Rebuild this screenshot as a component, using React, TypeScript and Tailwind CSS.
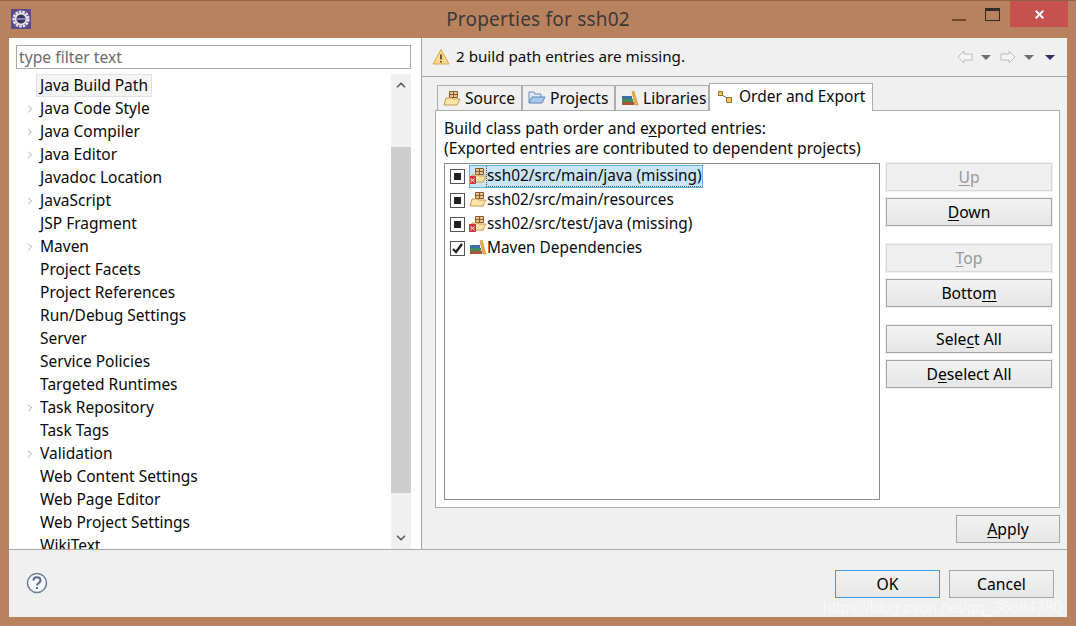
import React from 'react';
import { X, ChevronUp, ChevronDown, ChevronRight } from 'lucide-react';

const treeItems: { label: string; arrow?: boolean }[] = [
  { label: 'Java Build Path' },
  { label: 'Java Code Style', arrow: true },
  { label: 'Java Compiler', arrow: true },
  { label: 'Java Editor', arrow: true },
  { label: 'Javadoc Location' },
  { label: 'JavaScript', arrow: true },
  { label: 'JSP Fragment' },
  { label: 'Maven', arrow: true },
  { label: 'Project Facets' },
  { label: 'Project References' },
  { label: 'Run/Debug Settings' },
  { label: 'Server' },
  { label: 'Service Policies' },
  { label: 'Targeted Runtimes' },
  { label: 'Task Repository', arrow: true },
  { label: 'Task Tags' },
  { label: 'Validation', arrow: true },
  { label: 'Web Content Settings' },
  { label: 'Web Page Editor' },
  { label: 'Web Project Settings' },
  { label: 'WikiText' },
];

const PackageIcon = ({ missing }: { missing?: boolean }) => (
  <svg width="18" height="18" viewBox="0 0 18 18" className="shrink-0">
    <path d="M6.5 1.5h8v6h-8z" fill="#e8c48e" stroke="#8a5a2c" />
    <path d="M10.5 1.5v6M6.5 4.5h8" stroke="#8a5a2c" />
    <path d="M3 8h6l1 1h7l-3 6H1z" fill="#fbe3a8" stroke="#c99a4e" />
    {missing && <rect x="0" y="9" width="7" height="8" fill="#d8323c" />}
    {missing && <path d="M1.5 11.5l4 3.5M5.5 11.5l-4 3.5" stroke="#fff" />}
  </svg>
);

const LibraryIcon = () => (
  <svg width="18" height="18" viewBox="0 0 18 18" className="shrink-0">
    <rect x="1" y="6" width="10" height="3" fill="#3a6ea5" />
    <rect x="1" y="9" width="11" height="3" fill="#3f8f5a" />
    <rect x="1" y="12" width="12" height="3" fill="#a8553a" />
    <path d="M11 2l2-1 4 14h-3z" fill="#e8b04a" stroke="#b57f25" strokeWidth="0.5" />
  </svg>
);

const FolderIcon = () => (
  <svg width="18" height="18" viewBox="0 0 18 18" className="shrink-0">
    <path d="M1 13V2h5l1 2h6v3" fill="#dbe9f8" stroke="#6b8fb8" />
    <path d="M1 13l3-6h13l-3 6z" fill="#a9c8ee" stroke="#5f86b6" />
  </svg>
);

const OrderIcon = () => (
  <svg width="16" height="16" viewBox="0 0 16 16" className="shrink-0">
    <path d="M1.5 2.5h4v4h-4z" fill="#f1c75c" stroke="#9a7426" />
    <path d="M9.5 8.5h5v5h-5z" fill="#f1c75c" stroke="#9a7426" />
    <path d="M5 6l5 3" stroke="#6d6d6d" />
  </svg>
);

const Underlined = ({ text, at }: { text: string; at: number }) => (
  <>
    {text.slice(0, at)}
    <span className="underline underline-offset-2">{text[at]}</span>
    {text.slice(at + 1)}
  </>
);

const SideButton = ({ text, at, disabled, className = '' }: { text: string; at: number; disabled?: boolean; className?: string }) => (
  <div
    className={`h-[28px] w-[166px] pt-[2px] flex items-center justify-center border ring-1 ring-[#f0f0f0] text-[15.7px] leading-none ${
      disabled
        ? 'bg-[#efefef] border-[#d8d8d8] text-[#9a9a9a]'
        : 'bg-gradient-to-b from-[#f2f2f2] to-[#e6e6e6] border-[#a5a5a5] text-black'
    } ${className}`}
  >
    <span><Underlined text={text} at={at} /></span>
  </div>
);

const Tab = ({ icon, label, width }: { icon: React.ReactNode; label: string; width: string }) => (
  <div className={`${width} h-[25px] flex items-center gap-[4px] pl-[5px] pt-[2px] bg-[#f0f0f0] border border-b-0 border-[#adadad] text-[15.6px] text-[#0a0a0a]`}>
    {icon}
    <span>{label}</span>
  </div>
);

const Row = ({ check, icon, label, selected }: { check: 'mixed' | 'on'; icon: React.ReactNode; label: string; selected?: boolean }) => (
  <div className="h-[24px] flex items-center pl-[5px]">
    <div className="w-[15px] h-[15px] border border-[#555555] bg-white flex items-center justify-center shrink-0 mr-[4px]">
      {check === 'mixed' ? (
        <div className="w-[7px] h-[7px] bg-[#222]" />
      ) : (
        <svg width="13" height="13" viewBox="0 0 13 13"><path d="M2 7l3 3 6-8" fill="none" stroke="#222" strokeWidth="2.4" /></svg>
      )}
    </div>
    <div className={`h-[23px] flex items-center pr-[1px] ${selected ? 'bg-[#c9e5f5] outline outline-1 -outline-offset-1 outline-[#5fb0dc]' : ''}`}>
      {icon}
      <span className={`text-[15.4px] leading-[20px] text-[#0a0a0a] ${selected ? 'outline outline-1 outline-dotted outline-[#555555]' : ''}`}>{label}</span>
    </div>
  </div>
);

export default function App() {
  return (
    <div className="w-[1076px] h-[626px] overflow-hidden relative bg-[#b9825f] border-t border-[#8f6246] font-['Noto_Sans','Open_Sans',sans-serif]">
      {/* Title bar */}
      <div className="h-[37px] relative flex items-center justify-center">
        <div className="absolute left-[11px] top-[8px] w-[20px] h-[20px] bg-[#5a4a8a] flex items-center justify-center">
          <svg width="18" height="18" viewBox="0 0 18 18">
            <circle cx="9" cy="9" r="7.4" fill="none" stroke="#e8e8e8" strokeWidth="2.4" strokeDasharray="2.6 1" />
            <circle cx="9" cy="9" r="5.4" fill="#3c3560" stroke="#e8e8e8" strokeWidth="1.6" />
            <path d="M4.5 9h9" stroke="#8a7ab0" strokeWidth="2" />
          </svg>
        </div>
        <span className="text-[19px] tracking-[0.2px] text-[#3a3a3a] -mt-[1px]">Properties for ssh02</span>
        <div className="absolute left-[952px] top-[18px] w-[14px] h-[2px] bg-[#6b4a35]" />
        <div className="absolute left-[985px] top-[7px] w-[15px] h-[13px] border border-[#2c2c2c] border-t-[3px]" />
        <div className="absolute left-[1010px] top-0 w-[58px] h-[26px] bg-[#c75050] flex items-center justify-center">
          <X className="w-[13px] h-[13px] text-white" strokeWidth={3.5} />
        </div>
      </div>

      {/* Dialog */}
      <div className="mx-[9px] h-[579px] bg-[#f0f0f0] flex flex-col">
        <div className="h-[512px] flex border-b border-[#a9a9a9]">
          {/* Left tree */}
          <div className="w-[412px] bg-white pl-[7px] pr-[10px] pt-[7px] flex flex-col">
            <div className="h-[24px] border border-[#a9a9a9] px-[2px] text-[15.7px] leading-[22px] text-[#6d6d6d]">type filter text</div>
            <div className="mt-[5px] flex-1 flex overflow-hidden">
              <div className="w-[375px] overflow-hidden">
                {treeItems.map((item, i) => (
                  <div key={item.label} className="h-[23px] flex items-center text-[15.5px] text-[#0a0a0a]">
                    <div className="w-[13px] ml-[8px] shrink-0">
                      {item.arrow && <ChevronRight className="w-[12px] h-[12px] text-[#8a8a8a]" strokeWidth={1.5} />}
                    </div>
                    <span className={i === 0 ? 'ml-[-1px] px-[3px] h-[23px] leading-[21px] bg-[#f5f5f5] border border-[#e2e2e2]' : 'ml-[3px]'}>{item.label}</span>
                  </div>
                ))}
              </div>
              <div className="w-[20px] bg-[#f0f0f0] flex flex-col items-center">
                <div className="h-[22px] flex items-center justify-center"><ChevronUp className="w-[14px] h-[14px] text-[#606060]" strokeWidth={3} /></div>
                <div className="h-[51px]" />
                <div className="w-full h-[346px] bg-[#cdcdcd]" />
                <div className="flex-1 flex items-end pb-[4px]"><ChevronDown className="w-[14px] h-[14px] text-[#606060]" strokeWidth={3} /></div>
              </div>
            </div>
          </div>

          {/* Right page */}
          <div className="flex-1 border-l border-[#a9a9a9] flex flex-col">
            <div className="h-[39px] flex items-center border-b border-[#a9a9a9]">
              <svg width="18" height="18" viewBox="0 0 18 18" className="ml-[10px] -mt-[1px]">
                <path d="M9 1.5L17 16H1z" fill="#f8d88a" stroke="#d8a855" strokeLinejoin="round" />
                <path d="M9 6.5v5M9 13v1.5" stroke="#4a3a1a" strokeWidth="1.6" />
              </svg>
              <span className="ml-[6px] -mt-[2px] text-[15.2px] text-[#0a0a0a]">2 build path entries are missing.</span>
              <div className="ml-auto mr-[12px] flex items-center">
                <svg width="16" height="14" viewBox="0 0 16 14"><path d="M1 7l6-6v3h8v6H7v3z" fill="#f5f5f5" stroke="#bdbdbd" /></svg>
                <div className="ml-[8px] w-0 h-0 border-x-[5px] border-x-transparent border-t-[5px] border-t-[#6f6f6f]" />
                <svg width="16" height="14" viewBox="0 0 16 14" className="ml-[9px]"><path d="M15 7L9 1v3H1v6h8v3z" fill="#f5f5f5" stroke="#bdbdbd" /></svg>
                <div className="ml-[8px] w-0 h-0 border-x-[5px] border-x-transparent border-t-[5px] border-t-[#6f6f6f]" />
                <div className="ml-[11px] w-0 h-0 border-x-[5px] border-x-transparent border-t-[5px] border-t-[#3b2a5e]" />
              </div>
            </div>

            <div className="flex-1 pl-[13px] pr-[7px] pt-[5px] flex flex-col">
              {/* Tabs */}
              <div className="h-[28px] pl-[2px] flex items-end relative z-10">
                <Tab icon={<PackageIcon />} label="Source" width="w-[85px]" />
                <Tab icon={<FolderIcon />} label="Projects" width="w-[93px]" />
                <Tab icon={<LibraryIcon />} label="Libraries" width="w-[94px]" />
                <div className="w-[164px] h-[28px] -mb-[1px] flex items-center gap-[6px] pl-[7px] pb-[1px] bg-white border border-b-0 border-[#adadad] text-[15.5px] text-[#0a0a0a]">
                  <OrderIcon />
                  <span>Order and Export</span>
                </div>
              </div>
              {/* Tab body */}
              <div className="h-[398px] bg-white border border-[#adadad] pl-[8px] flex flex-col">
                <div className="text-[15.7px] leading-[20px] pt-[7px] text-[#0a0a0a]">
                  <div><Underlined text="Build class path order and exported entries:" at={28} /></div>
                  <div>(Exported entries are contributed to dependent projects)</div>
                </div>
                <div className="mt-[5px] flex gap-[6px]">
                  <div className="w-[436px] h-[337px] border border-[#8c8c8c]">
                    <Row check="mixed" icon={<PackageIcon missing />} label="ssh02/src/main/java (missing)" selected />
                    <Row check="mixed" icon={<PackageIcon />} label="ssh02/src/main/resources" />
                    <Row check="mixed" icon={<PackageIcon missing />} label="ssh02/src/test/java (missing)" />
                    <Row check="on" icon={<LibraryIcon />} label="Maven Dependencies" />
                  </div>
                  <div className="flex flex-col">
                    <SideButton text="Up" at={0} disabled />
                    <SideButton text="Down" at={0} className="mt-[7px]" />
                    <SideButton text="Top" at={0} disabled className="mt-[18px]" />
                    <SideButton text="Bottom" at={5} className="mt-[7px]" />
                    <SideButton text="Select All" at={4} className="mt-[18px]" />
                    <SideButton text="Deselect All" at={1} className="mt-[7px]" />
                  </div>
                </div>
              </div>
              <div className="flex justify-end mt-[7px]">
                <div className="w-[104px] h-[28px] pt-[2px] flex items-center justify-center border border-[#a5a5a5] bg-gradient-to-b from-[#f2f2f2] to-[#e6e6e6] text-[15.7px] text-black">
                  <span><Underlined text="Apply" at={0} /></span>
                </div>
              </div>
            </div>
          </div>
        </div>

        {/* Footer */}
        <div className="flex-1 flex items-center pl-[17px] pr-[13px]">
          <svg width="22" height="22" viewBox="0 0 22 22" className="-mt-[2px]">
            <circle cx="11" cy="11" r="9.5" fill="#f7f9fc" stroke="#6d7f9f" strokeWidth="1.5" />
            <path d="M7.5 8.5c0-4.5 7-4.5 7 0 0 2.5-3.5 2.5-3.5 5" fill="none" stroke="#54688c" strokeWidth="2" />
            <rect x="10" y="15" width="2" height="2" fill="#54688c" />
          </svg>
          <div className="ml-auto flex gap-[9px]">
            <div className="w-[105px] h-[28px] pt-[2px] flex items-center justify-center border border-[#3f9bec] bg-gradient-to-b from-[#f2f2f2] to-[#e6e6e6] text-[15.7px] text-black">OK</div>
            <div className="w-[105px] h-[28px] pt-[2px] flex items-center justify-center border border-[#a5a5a5] bg-gradient-to-b from-[#f2f2f2] to-[#e6e6e6] text-[15.7px] text-black">Cancel</div>
          </div>
        </div>
      </div>

      {/* Watermark */}
      <div className="absolute left-[823px] top-[596px] text-[15.6px] leading-[22px] text-white/50 font-['Liberation_Sans',sans-serif] whitespace-nowrap">https://blog.csdn.net/qq_36684380</div>
    </div>
  );
}
